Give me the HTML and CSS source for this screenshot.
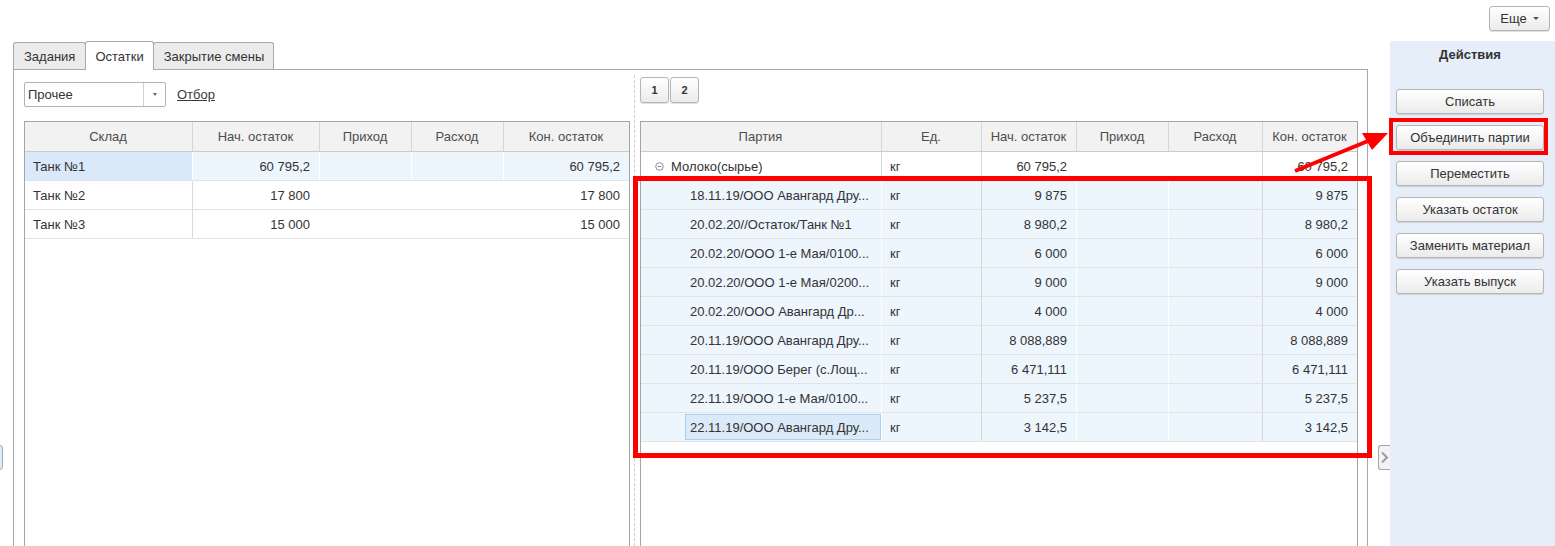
FILE: index.html
```html
<!DOCTYPE html>
<html lang="ru">
<head>
<meta charset="utf-8">
<title>Остатки</title>
<link rel="stylesheet" href="styles.css">
</head>
<body>
<div class="app">
  <div class="topbar">
    <button class="btn more">Еще <span class="caret"></span></button>
  </div>
  <div class="main">
    <div class="handle handle-left"></div>
    <div class="tabs-area">
      <div class="tabs">
        <div class="tab">Задания</div>
        <div class="tab active">Остатки</div>
        <div class="tab tab-narrow">Закрытие смены</div>
      </div>
      <div class="tab-panel">
        <div class="pane pane-left">
          <div class="toolbar toolbar-left">
            <div class="select">
              <span class="select-value">Прочее</span>
              <span class="select-btn"><span class="caret small"></span></span>
            </div>
            <a class="link">Отбор</a>
          </div>
          <div class="grid grid-left">
            <div class="row head">
              <div class="c sep">Склад</div>
              <div class="c">Нач. остаток</div>
              <div class="c">Приход</div>
              <div class="c">Расход</div>
              <div class="c last">Кон. остаток</div>
            </div>
            <div class="row sel">
              <div class="c first">Танк №1</div>
              <div class="c r">60 795,2</div>
              <div class="c r"></div>
              <div class="c r"></div>
              <div class="c r last">60 795,2</div>
            </div>
            <div class="row">
              <div class="c sep">Танк №2</div>
              <div class="c r">17 800</div>
              <div class="c r"></div>
              <div class="c r"></div>
              <div class="c r last">17 800</div>
            </div>
            <div class="row">
              <div class="c sep">Танк №3</div>
              <div class="c r">15 000</div>
              <div class="c r"></div>
              <div class="c r"></div>
              <div class="c r last">15 000</div>
            </div>
          </div>
        </div>
        <div class="splitter"><div class="splitter-line"></div></div>
        <div class="pane pane-right">
          <div class="toolbar toolbar-right">
            <button class="btn page">1</button>
            <button class="btn page">2</button>
          </div>
          <div class="grid grid-right">
            <div class="row head">
              <div class="c">Партия</div>
              <div class="c">Ед.</div>
              <div class="c">Нач. остаток</div>
              <div class="c">Приход</div>
              <div class="c">Расход</div>
              <div class="c last">Кон. остаток</div>
            </div>
            <div class="row group">
              <div class="c sep tree"><svg class="minus" width="9" height="9" viewBox="0 0 9 9"><circle cx="4.5" cy="4.5" r="3.8" fill="none" stroke="#8c8c8c" stroke-width="1"/><path d="M2.6 4.5h3.8" stroke="#8c8c8c" stroke-width="1"/></svg>Молоко(сырье)</div>
              <div class="c sep">кг</div>
              <div class="c r">60 795,2</div>
              <div class="c r"></div>
              <div class="c r sep"></div>
              <div class="c r last">60 795,2</div>
            </div>
            <div class="row item">
              <div class="c child"><span class="cell-text">18.11.19/ООО Авангард Дру...</span></div>
              <div class="c sep">кг</div>
              <div class="c r">9 875</div>
              <div class="c r"></div>
              <div class="c r sep"></div>
              <div class="c r last">9 875</div>
            </div>
            <div class="row item">
              <div class="c child"><span class="cell-text">20.02.20//Остаток/Танк №1</span></div>
              <div class="c sep">кг</div>
              <div class="c r">8 980,2</div>
              <div class="c r"></div>
              <div class="c r sep"></div>
              <div class="c r last">8 980,2</div>
            </div>
            <div class="row item">
              <div class="c child"><span class="cell-text">20.02.20/ООО 1-е Мая/0100...</span></div>
              <div class="c sep">кг</div>
              <div class="c r">6 000</div>
              <div class="c r"></div>
              <div class="c r sep"></div>
              <div class="c r last">6 000</div>
            </div>
            <div class="row item">
              <div class="c child"><span class="cell-text">20.02.20/ООО 1-е Мая/0200...</span></div>
              <div class="c sep">кг</div>
              <div class="c r">9 000</div>
              <div class="c r"></div>
              <div class="c r sep"></div>
              <div class="c r last">9 000</div>
            </div>
            <div class="row item">
              <div class="c child"><span class="cell-text">20.02.20/ООО Авангард Др...</span></div>
              <div class="c sep">кг</div>
              <div class="c r">4 000</div>
              <div class="c r"></div>
              <div class="c r sep"></div>
              <div class="c r last">4 000</div>
            </div>
            <div class="row item">
              <div class="c child"><span class="cell-text">20.11.19/ООО Авангард Дру...</span></div>
              <div class="c sep">кг</div>
              <div class="c r">8 088,889</div>
              <div class="c r"></div>
              <div class="c r sep"></div>
              <div class="c r last">8 088,889</div>
            </div>
            <div class="row item">
              <div class="c child"><span class="cell-text">20.11.19/ООО Берег (с.Лощ...</span></div>
              <div class="c sep">кг</div>
              <div class="c r">6 471,111</div>
              <div class="c r"></div>
              <div class="c r sep"></div>
              <div class="c r last">6 471,111</div>
            </div>
            <div class="row item">
              <div class="c child"><span class="cell-text">22.11.19/ООО 1-е Мая/0100...</span></div>
              <div class="c sep">кг</div>
              <div class="c r">5 237,5</div>
              <div class="c r"></div>
              <div class="c r sep"></div>
              <div class="c r last">5 237,5</div>
            </div>
            <div class="row item">
              <div class="c child"><span class="cell-text focus">22.11.19/ООО Авангард Дру...</span></div>
              <div class="c sep">кг</div>
              <div class="c r">3 142,5</div>
              <div class="c r"></div>
              <div class="c r sep"></div>
              <div class="c r last">3 142,5</div>
            </div>
          </div>
        </div>
      </div>
    </div>
    <div class="gutter">
      <div class="handle handle-right">
        <svg width="11" height="23" viewBox="0 0 11 23"><path d="M3 6.5 L8 11.5 L3 16.5" fill="none" stroke="#9b9b9b" stroke-width="2"/></svg>
      </div>
    </div>
    <div class="sidebar">
      <div class="side-title">Действия</div>
      <button class="btn side-btn">Списать</button>
      <button class="btn side-btn">Объединить партии</button>
      <button class="btn side-btn">Переместить</button>
      <button class="btn side-btn">Указать остаток</button>
      <button class="btn side-btn">Заменить материал</button>
      <button class="btn side-btn">Указать выпуск</button>
    </div>
  </div>
  <div class="mark mark-rows"></div>
  <div class="mark mark-btn"></div>
  <svg class="arrow" width="1555" height="546" viewBox="0 0 1555 546">
    <line x1="1295" y1="171" x2="1368" y2="141" stroke="#ff0000" stroke-width="4"/>
    <polygon points="1388,133 1362,133 1372,150" fill="#ff0000"/>
  </svg>
</div>
</body>
</html>
```
FILE: styles.css
```css
* { box-sizing: border-box; }

body {
  margin: 0;
  font-family: "Liberation Sans", Arial, sans-serif;
  font-size: 13px;
  color: #333;
  background: #fff;
}

.app {
  position: relative;
  width: 1555px;
  height: 546px;
  overflow: hidden;
}

/* top bar */
.topbar {
  height: 41px;
  display: flex;
  justify-content: flex-end;
  align-items: flex-start;
  padding: 6px 5px 0 0;
}

.btn {
  font: inherit;
  color: #333;
  background: linear-gradient(#ffffff, #ebebeb);
  border: 1px solid #b5b5b5;
  border-radius: 3px;
  box-shadow: 0 1px 1px rgba(0, 0, 0, 0.13);
  display: flex;
  align-items: center;
  justify-content: center;
  padding: 0;
  cursor: default;
}

.more {
  width: 61px;
  height: 25px;
  gap: 6px;
}

.caret {
  width: 0;
  height: 0;
  border-left: 3px solid transparent;
  border-right: 3px solid transparent;
  border-top: 3px solid #555;
}

/* main area */
.main {
  display: flex;
  height: 505px;
  position: relative;
}

.handle-left {
  position: absolute;
  left: -9px;
  top: 404px;
  width: 12px;
  height: 25px;
  border: 1px solid #a9a9a9;
  border-radius: 3px;
  background: #dcebf8;
}

.tabs-area {
  margin-left: 13px;
  width: 1355px;
  display: flex;
  flex-direction: column;
}

.tabs {
  height: 28px;
  display: flex;
  align-items: flex-end;
}

.tab {
  height: 27px;
  padding: 0 10px;
  display: flex;
  align-items: center;
  border: 1px solid #a8a8a8;
  border-bottom: none;
  border-radius: 3px 3px 0 0;
  background: #ebebeb;
  margin-right: -1px;
  color: #333;
}

.tab.active {
  height: 29px;
  padding: 0 9px;
  margin-bottom: -1px;
  background: #fff;
  position: relative;
  z-index: 1;
}

.tab.tab-narrow {
  padding: 0 9px 0 10px;
}

.tab-panel {
  flex: 1;
  border: 1px solid #a8a8a8;
  border-bottom: none;
  display: flex;
  padding: 0 9px 0 10px;
  min-height: 0;
}

.pane {
  display: flex;
  flex-direction: column;
}

.pane-left { width: 606px; }
.pane-right { width: 718px; }

.splitter {
  width: 10px;
  padding: 5px 0 0 4px;
}

.splitter-line {
  height: 100%;
  border-left: 1px dashed #cdcdcd;
}

/* toolbars */
.toolbar {
  display: flex;
  align-items: center;
}

.toolbar-left {
  margin-top: 12px;
  height: 25px;
  margin-bottom: 14px;
}

.toolbar-right {
  margin-top: 7px;
  height: 26px;
  margin-bottom: 18px;
  gap: 1px;
}

.select {
  width: 142px;
  height: 25px;
  border: 1px solid #b3b3b3;
  border-radius: 2px;
  display: flex;
  background: #fff;
}

.select-value {
  flex: 1;
  padding-left: 3px;
  display: flex;
  align-items: center;
}

.select-btn {
  width: 22px;
  border-left: 1px solid #d0d0d0;
  display: flex;
  align-items: center;
  justify-content: center;
}

.caret.small {
  border-left-width: 2.5px;
  border-right-width: 2.5px;
  border-top-width: 3px;
  border-top-color: #666;
}

.link {
  margin-left: 11px;
  color: #3a3a3a;
  text-decoration: underline;
}

.page {
  width: 29px;
  height: 26px;
  font-size: 11px;
  font-weight: bold;
}

/* grids */
.grid {
  flex: 1;
  border: 1px solid #a5a5a5;
  border-bottom: none;
  background: #fff;
}

.row {
  display: grid;
  height: 29px;
  border-bottom: 1px solid #e3e3e3;
}

.grid-left .row {
  grid-template-columns: 168px 127px 92px 92px 125px;
}

.grid-right .row {
  grid-template-columns: 241px 100px 95px 92px 94px 94px;
}

.c {
  display: flex;
  align-items: center;
  padding: 0 9px 0 8px;
  white-space: nowrap;
  overflow: hidden;
  border-right: 1px solid transparent;
}

.c.r { justify-content: flex-end; }
.c.last { border-right: none; }
.c.sep { border-right-color: #d9d9d9; }

.row.head {
  height: 30px;
  background: #f2f2f2;
  border-bottom: 1px solid #cbcbcb;
}

.row.head .c {
  justify-content: center;
  color: #4d4d4d;
  border-right: 1px solid #d6d6d6;
}

.row.head .c.last { border-right: none; }

.row.sel {
  background: #edf5fd;
}

.row.sel .c { border-right-color: #fff; }
.row.sel .c.last { border-right: none; }

.row.sel .c.first {
  background: #d9e9f9;
}

.tree {
  padding-left: 14px;
}

.minus {
  margin-right: 7px;
  flex: none;
}

.row.item {
  background: #edf5fd;
}

.row.item .c { border-right-color: #fff; }
.row.item .c.sep { border-right-color: #d6d6d6; }
.row.item .c.last { border-right: none; }

.c.child {
  padding: 0 0 0 44px;
}

.cell-text {
  flex: 1;
  height: 26px;
  display: flex;
  align-items: center;
  padding-left: 4px;
  border: 1px solid transparent;
  overflow: hidden;
}

.cell-text.focus {
  border-color: #a9d0f1;
  background: #dbeaf8;
}

/* right gutter & sidebar */
.gutter {
  width: 22px;
  padding: 404px 0 0 10px;
}

.handle-right {
  width: 12px;
  height: 25px;
  border: 1px solid #a3a3a3;
  border-right: none;
  border-radius: 3px 0 0 3px;
  background: #f3f3f3;
  display: flex;
  align-items: center;
  justify-content: center;
}

.sidebar {
  width: 165px;
  background: #e5eef9;
  padding: 0 11px 0 6px;
  display: flex;
  flex-direction: column;
}

.side-title {
  height: 27px;
  line-height: 27px;
  text-align: center;
  font-weight: bold;
  color: #333;
  margin-bottom: 21px;
}

.side-btn {
  width: 148px;
  height: 25px;
  margin-bottom: 11px;
  flex: none;
}

/* annotations */
.mark {
  position: absolute;
  border: 5px solid #ff0000;
  z-index: 5;
}

.mark-rows {
  left: 633px;
  top: 176px;
  width: 739px;
  height: 282px;
}

.mark-btn {
  left: 1389px;
  top: 118px;
  width: 159px;
  height: 37px;
  border-width: 4px;
}

.arrow {
  position: absolute;
  left: 0;
  top: 0;
  z-index: 6;
  pointer-events: none;
}
```
